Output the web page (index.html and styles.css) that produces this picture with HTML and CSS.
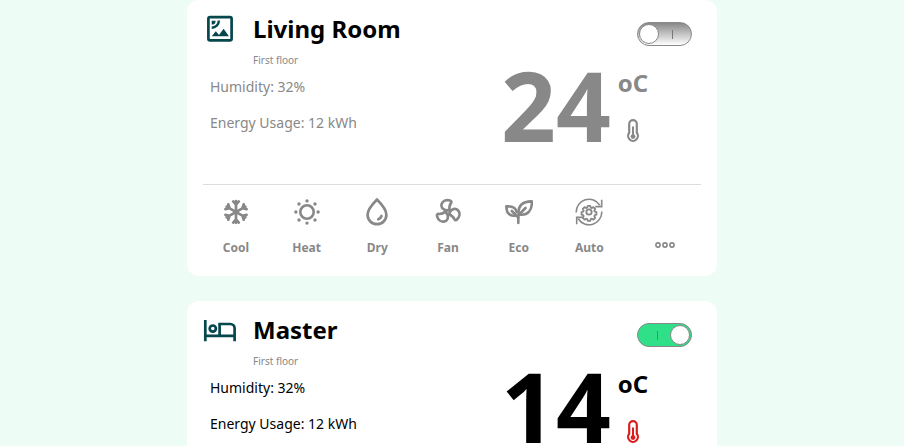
FILE: index.html
```html
<!DOCTYPE html>
<html lang="en">
<head>
<meta charset="utf-8">
<title>Rooms</title>
<link rel="stylesheet" href="styles.css">
</head>
<body>
<svg class="sprite" aria-hidden="true">
  <symbol id="thermo" viewBox="0 0 12 24"><path d="M2.200 13.800V4.900a3.800 3.800 0 0 1 7.600 0V13.800a4.900 4.900 0 1 1-7.600 0z" fill="none" stroke="currentColor" stroke-width="2.200"/><path d="M6 7.500v10" stroke="currentColor" stroke-width="2"/><circle cx="6" cy="17.600" r="2.400" fill="currentColor"/></symbol>
  <symbol id="cool" viewBox="0 0 28 28"><g fill="none" stroke="currentColor" stroke-width="2.700" stroke-linecap="round" stroke-linejoin="round"><g id="arm"><path d="M14 3.200v21.600M11.200 3.400 14 6.600l2.800-3.200M11.200 24.600l2.800-3.200 2.800 3.200"/></g><use href="#arm" transform="rotate(60 14 14)"/><use href="#arm" transform="rotate(120 14 14)"/></g></symbol>
  <symbol id="heat" viewBox="0 0 28 28"><circle cx="14" cy="14" r="6.700" fill="none" stroke="currentColor" stroke-width="2.600"/><g fill="currentColor"><circle cx="14" cy="2.900" r="1.700"/><circle cx="14" cy="25.100" r="1.700"/><circle cx="2.900" cy="14" r="1.700"/><circle cx="25.100" cy="14" r="1.700"/><circle cx="6" cy="6" r="1.700"/><circle cx="22" cy="6" r="1.700"/><circle cx="6" cy="22" r="1.700"/><circle cx="22" cy="22" r="1.700"/></g></symbol>
  <symbol id="dry" viewBox="0 0 28 28"><g fill="none" stroke="currentColor" stroke-width="2.700" stroke-linecap="round" stroke-linejoin="round"><path d="M14 1.500C10 5.500 4.600 10.800 4.600 16.800a9.400 9.400 0 0 0 18.800 0C23.400 10.800 18 5.500 14 1.500z"/><path d="M18.500 18a5.200 5.200 0 0 1-3.200 3.300"/></g></symbol>
  <symbol id="fan" viewBox="0 0 28 28"><g fill="none" stroke="currentColor" stroke-width="2.700" stroke-linejoin="round"><g id="blade"><path d="M12.300 12.300C8.500 11.800 6.700 9 7.600 6 8.500 3 12 1.500 16 2.500c1.500.4 1.700 1.600.9 2.600-1.500 2-1.700 4-1.400 7"/></g><use href="#blade" transform="rotate(120 14 14)"/><use href="#blade" transform="rotate(240 14 14)"/><circle cx="14" cy="14" r="1.900"/></g></symbol>
  <symbol id="eco" viewBox="0 0 28 28"><g fill="none" stroke="currentColor" stroke-width="2.600" stroke-linecap="round" stroke-linejoin="round"><path d="M13.300 25v-7.500L20.500 10"/><path d="M13.800 16.500C12.300 8 17.500 3.300 26.800 3.400 27.300 12.500 22.500 18 14.300 16.500"/><path d="M13.300 19.500 6.800 13"/><path d="M10.600 17.400C5.500 18.800 1.200 15.500 1.400 8.200c5.600-.2 9.600 1.800 10.200 5.900"/></g></symbol>
  <symbol id="auto" viewBox="0 0 28 28"><g fill="none" stroke="currentColor" stroke-width="1.600"><path d="M1.200 14.500A12.800 12.800 0 0 1 24.800 7.200M26.800 13.500A12.800 12.800 0 0 1 3.200 20.800"/><path d="M26.700 1.800v6.800h-6.500M1.700 26.200v-6.800h6.500"/><g transform="translate(3.360 3.360) scale(.76)"><circle cx="14" cy="14" r="3.500" stroke-width="2.400"/><path stroke-width="2.400" stroke-linejoin="round" d="M12.300 6h3.400l.6 2.200 1.500.6 2-1.200 2.400 2.400-1.200 2 .6 1.500 2.200.6v3.400l-2.200.6-.6 1.500 1.200 2-2.400 2.400-2-1.200-1.500.6-.6 2.200h-3.400l-.6-2.200-1.500-.6-2 1.200-2.400-2.400 1.200-2-.6-1.500-2.200-.6v-3.400l2.200-.6.6-1.500-1.200-2 2.400-2.400 2 1.200 1.500-.6z"/></g></g></symbol>
</svg>
<main class="rooms">
  <section class="card off">
    <header class="head">
      <svg class="room-icon" viewBox="0 0 34 34"><rect x="5.400" y="5.200" width="23.200" height="23.200" rx="1.600" fill="none" stroke="currentColor" stroke-width="2.700"/><path d="M8.800 24.200l4-5 3.200 3.800 4.600-6.200 5.300 7.400z" fill="currentColor"/><path d="M8.700 8.700h3.900a3.900 3.900 0 0 1-3.900 3.900z" fill="currentColor"/><path d="M15.900 8.500a7.200 7.200 0 0 1-7.200 7.200" fill="none" stroke="currentColor" stroke-width="2.400"/></svg>
      <div class="names"><h2>Living Room</h2><p>First floor</p></div>
      <div class="toggle"><span class="knob"></span><span class="mark"></span></div>
    </header>
    <div class="status">
      <div class="facts"><p>Humidity: 32%</p><p>Energy Usage: 12 kWh</p></div>
      <div class="temp">24</div>
      <div class="unit"><span>oC</span><svg class="thermo"><use href="#thermo"/></svg></div>
    </div>
    <div class="modes">
      <div class="mode"><svg><use href="#cool"/></svg><span>Cool</span></div>
      <div class="mode"><svg><use href="#heat"/></svg><span>Heat</span></div>
      <div class="mode"><svg><use href="#dry"/></svg><span>Dry</span></div>
      <div class="mode"><svg><use href="#fan"/></svg><span>Fan</span></div>
      <div class="mode"><svg><use href="#eco"/></svg><span>Eco</span></div>
      <div class="mode"><svg><use href="#auto"/></svg><span>Auto</span></div>
      <svg class="more" viewBox="0 0 20 6"><g fill="none" stroke="currentColor" stroke-width="1.600"><circle cx="3" cy="3" r="2.100"/><circle cx="10" cy="3" r="2.100"/><circle cx="17" cy="3" r="2.100"/></g></svg>
    </div>
  </section>
  <section class="card on">
    <header class="head">
      <svg class="room-icon" viewBox="0 0 34 34"><g fill="none" stroke="currentColor" stroke-width="2.700"><path d="M2.300 7v21.300M2.300 22.800h29.400M31.600 28.300V15.300a4.300 4.300 0 0 0-4.300-4.300H16.600v11.800"/><circle cx="9.800" cy="15.600" r="3.100"/></g></svg>
      <div class="names"><h2>Master</h2><p>First floor</p></div>
      <div class="toggle"><span class="mark"></span><span class="knob"></span></div>
    </header>
    <div class="status">
      <div class="facts"><p>Humidity: 32%</p><p>Energy Usage: 12 kWh</p></div>
      <div class="temp">14</div>
      <div class="unit"><span>oC</span><svg class="thermo"><use href="#thermo"/></svg></div>
    </div>
  </section>
</main>
</body>
</html>
```
FILE: styles.css
```css
* { box-sizing: border-box; }
body {
  margin: 0;
  background: #edfcf5;
  font-family: "Noto Sans", sans-serif;
}
h2, p { margin: 0; }
svg { display: block; }
.sprite { position: absolute; width: 0; height: 0; }
.rooms {
  width: 530px;
  height: 446px;
  overflow: hidden;
  margin: 0 auto;
  display: flex;
  flex-direction: column;
  gap: 25px;
}
.card {
  height: 276px;
  flex: none;
  padding: 12px 16px 0;
  border-radius: 12px;
  background: #fff;
}
.card.on { height: 145px; border-radius: 12px 12px 0 0; }
.off { color: #888; }
.on { color: #000; }
.head { display: flex; height: 57px; }
.room-icon { width: 34px; height: 34px; color: #04474d; }
.names { flex: 1; margin-left: 16px; }
.names h2 { font-size: 24px; line-height: 33px; color: #000; }
.names p { margin-top: 8px; font-size: 10px; line-height: 14px; color: #888; }
.toggle {
  display: flex;
  align-items: center;
  justify-content: space-between;
  width: 55px;
  height: 24px;
  margin: 10px 9px 0 0;
  padding: 0 1px;
  border: 1px solid #888;
  border-radius: 12px;
}
.off .toggle { background: linear-gradient(#888, #fff); }
.on .toggle { background: #2fe088; }
.knob {
  flex: none;
  width: 20px;
  height: 20px;
  border: 1px solid #888;
  border-radius: 50%;
  background: #fff;
}
.mark { flex: none; width: 1px; height: 9px; background: #777; }
.off .mark { margin-right: 17px; }
.on .mark { margin-left: 18px; }
.status { display: flex; height: 115px; }
.facts {
  width: 298px;
  padding: 8px 0 0 7px;
  font-size: 14px;
  line-height: 20px;
}
.facts p + p { margin-top: 16px; }
.temp { font-size: 96px; font-weight: 700; line-height: 71px; }
.unit {
  margin-left: 7px;
  font-size: 24px;
  font-weight: 700;
  line-height: 27px;
}
.unit span { display: block; }
.thermo { width: 12px; height: 24px; margin: 23px 0 0 9px; }
.on .thermo { color: #d91e1e; }
.modes {
  display: grid;
  grid-template-columns: repeat(6, 70.7px) 80px;
  border-top: 1px solid #ddd;
  height: 80px;
}
.mode {
  display: flex;
  flex-direction: column;
  align-items: center;
  margin-left: -4.8px;
  padding-top: 13px;
  font-size: 12px;
  font-weight: 700;
}
.mode svg { width: 28px; height: 28px; }
.mode span { margin-top: 13px; line-height: 18px; }
.more { width: 20px; height: 6px; margin: 57px 0 0 27.8px; }
```
